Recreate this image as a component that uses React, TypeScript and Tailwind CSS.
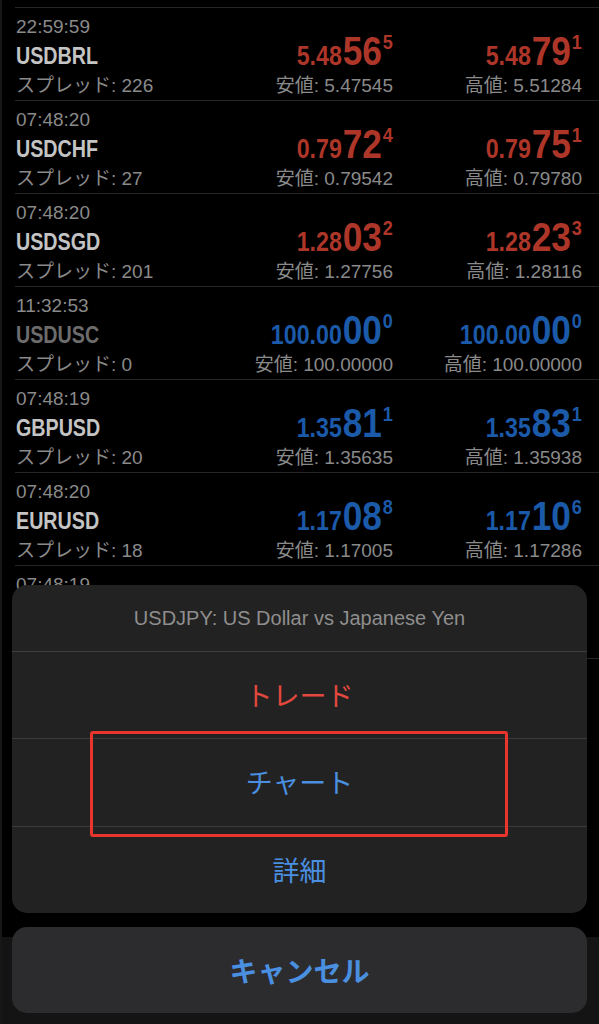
const sans = "font-['Liberation_Sans',sans-serif]";
const body = "font-['Liberation_Sans','Noto_Sans_CJK_JP',sans-serif]";
const jp = "font-['Noto_Sans_CJK_JP','Liberation_Sans',sans-serif]";

type Quote = {
  time: string;
  symbol?: string;
  spread?: number;
  bid?: [string, string, string];
  ask?: [string, string, string];
  low?: string;
  high?: string;
  up?: boolean;
  dim?: boolean;
};

const quotes: Quote[] = [
  { time: "22:59:59", symbol: "USDBRL", spread: 226, bid: ["5.48", "56", "5"], ask: ["5.48", "79", "1"], low: "5.47545", high: "5.51284", up: false },
  { time: "07:48:20", symbol: "USDCHF", spread: 27, bid: ["0.79", "72", "4"], ask: ["0.79", "75", "1"], low: "0.79542", high: "0.79780", up: false },
  { time: "07:48:20", symbol: "USDSGD", spread: 201, bid: ["1.28", "03", "2"], ask: ["1.28", "23", "3"], low: "1.27756", high: "1.28116", up: false },
  { time: "11:32:53", symbol: "USDUSC", spread: 0, bid: ["100.00", "00", "0"], ask: ["100.00", "00", "0"], low: "100.00000", high: "100.00000", up: true, dim: true },
  { time: "07:48:19", symbol: "GBPUSD", spread: 20, bid: ["1.35", "81", "1"], ask: ["1.35", "83", "1"], low: "1.35635", high: "1.35938", up: true },
  { time: "07:48:20", symbol: "EURUSD", spread: 18, bid: ["1.17", "08", "8"], ask: ["1.17", "10", "6"], low: "1.17005", high: "1.17286", up: true },
  { time: "07:48:19" },
];

// the quotes use a condensed bold face; squeeze Liberation Sans to match
function Price({ parts, up }: { parts: [string, string, string]; up: boolean }) {
  const [pre, big, sup] = parts;
  return (
    <div
      className={`flex origin-right scale-x-[0.86] items-baseline justify-end font-bold ${sans} ${
        up ? "text-[#1b59a9]" : "text-[#ad3629]"
      }`}
    >
      <span className="text-[27px] leading-none">{pre}</span>
      <span className="ml-px text-[41px] leading-none">{big}</span>
      <span className="ml-px self-start text-[21px] leading-none">{sup}</span>
    </div>
  );
}

function Side({ parts, up, label }: { parts?: [string, string, string]; up?: boolean; label: string }) {
  return (
    <div className="flex w-[189px] flex-col items-end">
      {parts && <Price parts={parts} up={!!up} />}
      <div className={`${body} mt-[2px] whitespace-nowrap text-[19px] leading-[24px] text-[#8a8a8a]`}>{label}</div>
    </div>
  );
}

function QuoteRow({ q }: { q: Quote }) {
  return (
    <div className="ml-[13px] flex h-[93px] shrink-0 items-end border-b border-[#262626] pb-[2px] pl-px pr-[17px]">
      <div className="flex flex-1 flex-col">
        <div className={`${body} text-[19px] leading-[24px] text-[#8a8a8a]`}>{q.time}</div>
        <div className="mt-[2px] h-[30px]">
          {q.symbol && (
            <span
              className={`${sans} inline-block origin-left scale-x-[0.82] text-[24px] font-bold leading-[30px] ${
                q.dim ? "text-[#6c6c6c]" : "text-[#c4c4c4]"
              }`}
            >
              {q.symbol}
            </span>
          )}
        </div>
        <div className={`${body} mt-[3px] h-[24px] text-[19px] leading-[24px] text-[#8a8a8a]`}>
          {q.spread !== undefined && `スプレッド: ${q.spread}`}
        </div>
      </div>
      {q.bid && <Side parts={q.bid} up={q.up} label={`安値: ${q.low}`} />}
      {q.ask && <Side parts={q.ask} up={q.up} label={`高値: ${q.high}`} />}
    </div>
  );
}

export default function App() {
  return (
    <div className="relative flex h-[1024px] w-[599px] flex-col overflow-hidden border-l-2 border-[#171717] bg-black">
      <div className="flex flex-1 flex-col overflow-hidden">
        <div className="ml-[13px] h-[8px] shrink-0 border-b border-[#262626]" />
        {quotes.map((q, i) => (
          <QuoteRow key={i} q={q} />
        ))}
      </div>
      <div className="h-[87px] shrink-0 bg-[#141414]" />

      {/* action sheet */}
      <div className="absolute bottom-[11px] left-[10px] right-[12px] flex flex-col gap-[14px]">
        <div className="flex flex-col rounded-[15px] bg-[#222222]">
          <div className={`${body} flex h-[67px] items-center justify-center border-b border-[#3e3e3e] text-[20px] text-[#8e8e8e]`}>
            USDJPY: US Dollar vs Japanese Yen
          </div>
          <div className={`${jp} flex h-[87px] items-center justify-center border-b border-[#3a3a3a] text-[27px] text-[#e2483e]`}>
            トレード
          </div>
          <div className={`${jp} relative flex h-[88px] items-center justify-center border-b border-[#3a3a3a] text-[27px] text-[#4a8fe0]`}>
            チャート
            <div className="absolute -bottom-[11px] -top-[8px] left-[78px] right-[79px] rounded-[3px] border-[3px] border-[#e8352d]" />
          </div>
          <div className={`${jp} flex h-[86px] items-center justify-center text-[27px] text-[#4a8fe0]`}>詳細</div>
        </div>
        <div className={`${jp} flex h-[86px] items-center justify-center rounded-[15px] bg-[#2c2c2e] text-[28px] font-bold text-[#4a8fe0]`}>
          キャンセル
        </div>
      </div>
    </div>
  );
}
